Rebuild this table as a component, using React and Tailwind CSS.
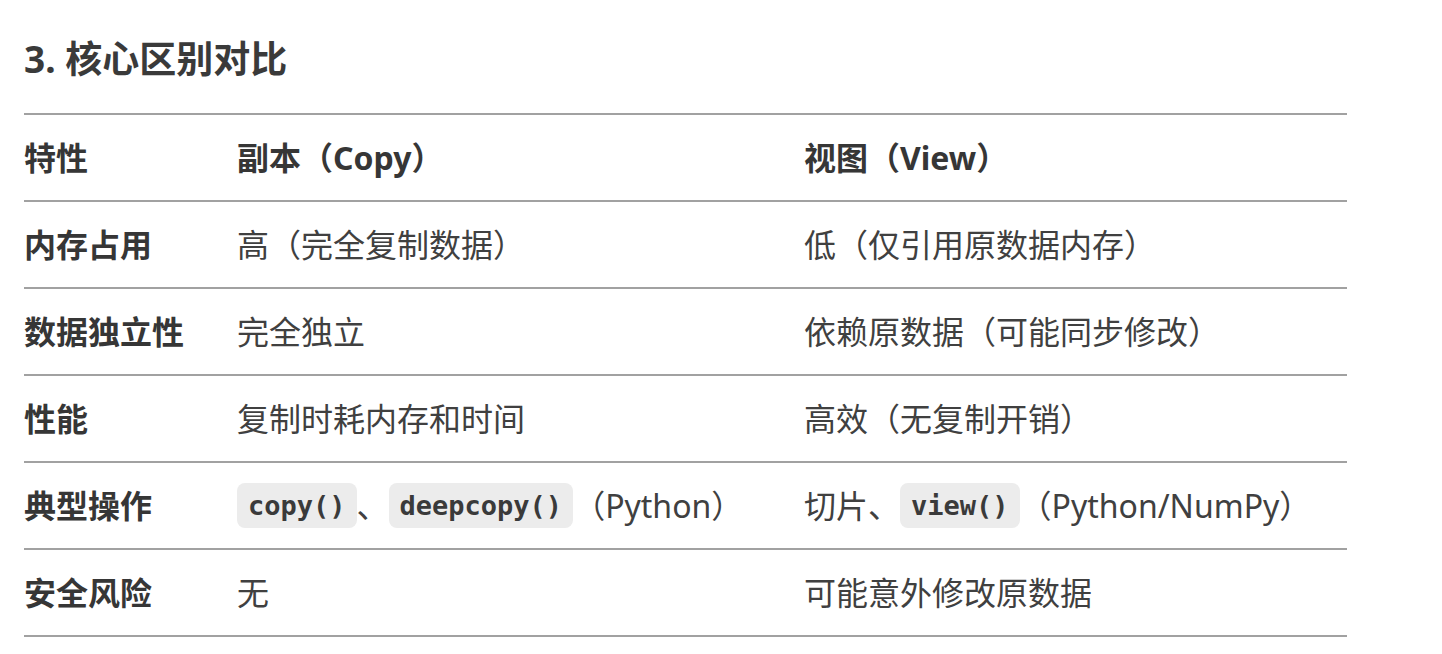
const rows = [
  {
    name: "内存占用",
    copy: "高（完全复制数据）",
    view: "低（仅引用原数据内存）",
  },
  {
    name: "数据独立性",
    copy: "完全独立",
    view: "依赖原数据（可能同步修改）",
  },
  {
    name: "性能",
    copy: "复制时耗内存和时间",
    view: "高效（无复制开销）",
  },
  {
    name: "典型操作",
    copy: (
      <>
        <Code>copy()</Code>、<Code>deepcopy()</Code>（Python）
      </>
    ),
    view: (
      <>
        切片、<Code>view()</Code>（Python/NumPy）
      </>
    ),
  },
  {
    name: "安全风险",
    copy: "无",
    view: "可能意外修改原数据",
  },
];

function Code({ children }) {
  return (
    <code className="inline-block rounded-lg bg-[#ececec] px-[11px] text-[27px] font-bold leading-[45px] align-top font-['DejaVu_Sans_Mono',monospace] text-[#3a3a3a]">
      {children}
    </code>
  );
}

function Row({ cells, head }) {
  return (
    <div className="grid grid-cols-[213px_567px_1fr] border-t-2 border-[#a1a1a1] py-5 leading-[45px]">
      {cells.map((cell, i) => (
        <div
          key={i}
          className={i === 0 || head ? "font-bold text-[#363636]" : "text-[#404040]"}
        >
          {cell}
        </div>
      ))}
    </div>
  );
}

export default function App() {
  return (
    <div className="min-h-screen bg-white pl-6 pt-8 font-['Noto_Sans','Noto_Sans_CJK_SC',sans-serif] text-[32px] text-[#404040]">
      <h3 className="text-[37px] font-bold leading-[54px] text-[#3a3a3a]">3. 核心区别对比</h3>
      <div className="mt-[27px] w-[1323px] border-b-2 border-[#a1a1a1]">
        <Row head cells={["特性", "副本（Copy）", "视图（View）"]} />
        {rows.map((r) => (
          <Row key={r.name} cells={[r.name, r.copy, r.view]} />
        ))}
      </div>
    </div>
  );
}
